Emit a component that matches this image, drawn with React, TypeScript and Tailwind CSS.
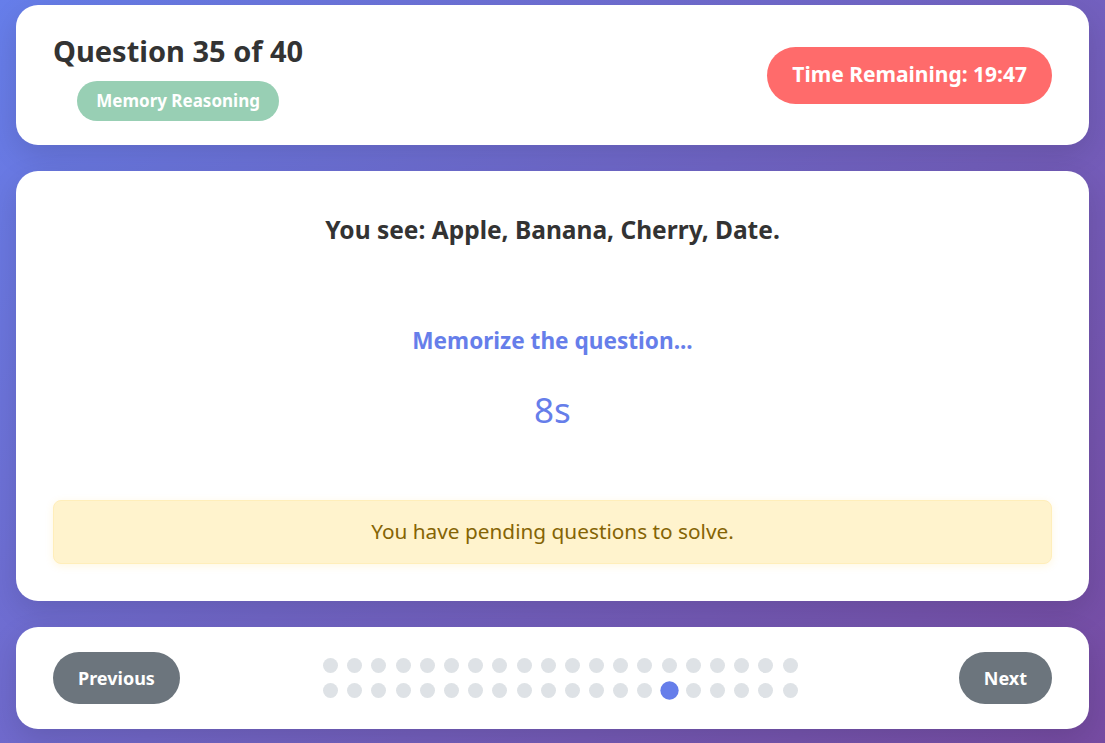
import React from "react";

const font = { fontFamily: '"Noto Sans", "Open Sans", sans-serif' };

const App: React.FC = () => {
  const dots = Array.from({ length: 40 }, (_, i) => i + 1);
  const current = 35;

  return (
    <div
      className="min-h-screen bg-linear-135 from-[#667eea] to-[#764ba2] px-[16px] pt-[5px] pb-[15px] flex flex-col gap-[26px]"
      style={font}
    >
      {/* Header */}
      <header className="bg-white rounded-[22px] shadow-[0_10px_30px_rgba(0,0,0,0.12)] px-[37px] pt-[29px] pb-[24px] flex items-center justify-between">
        <div className="flex flex-col items-center">
          <h1 className="text-[29px] leading-[34px] font-bold text-[#333]">Question 35 of 40</h1>
          <span className="mt-[13px] h-[40px] px-[19px] flex items-center rounded-full bg-[#98cfb4] text-white text-[17px] font-bold">
            Memory Reasoning
          </span>
        </div>
        <div className="h-[57px] px-[25px] flex items-center rounded-full bg-[#ff6b6b] text-white text-[21px] font-bold mb-[5px]">
          Time Remaining: 19:47
        </div>
      </header>

      {/* Question */}
      <main className="bg-white rounded-[22px] shadow-[0_10px_30px_rgba(0,0,0,0.12)] px-[37px] pt-[37px] pb-[37px] flex flex-col items-center">
        <p className="text-[24.5px] leading-[44px] font-bold text-[#333]">
          You see: Apple, Banana, Cherry, Date.
        </p>
        <p className="mt-[74px] text-[22.6px] leading-[30px] font-bold text-[#667eea]">
          Memorize the question...
        </p>
        <p className="mt-[29px] text-[35px] leading-[50px] text-[#667eea]">8s</p>
        <div className="mt-[65px] w-full h-[64px] rounded-[8px] bg-[#fff3cd] border border-[#ffeeba] shadow-[0_2px_8px_rgba(255,193,7,0.12)] flex items-center justify-center text-[20.8px] text-[#856404]">
          You have pending questions to solve.
        </div>
      </main>

      {/* Navigation */}
      <nav className="bg-white rounded-[22px] shadow-[0_10px_30px_rgba(0,0,0,0.12)] px-[37px] py-[25px] flex items-center justify-between">
        <button className="h-[52px] px-[25px] rounded-full bg-[#6c757d] text-white text-[18px] font-bold">
          Previous
        </button>
        <div className="shrink-0 mr-[18px] grid grid-cols-[repeat(20,15px)] gap-x-[9.2px] gap-y-[10px]">
          {dots.map((n) => (
            <span
              key={n}
              className={
                n === current
                  ? "w-[15px] h-[15px] rounded-full bg-[#667eea] scale-[1.22]"
                  : "w-[15px] h-[15px] rounded-full bg-[#dee2e6]"
              }
            />
          ))}
        </div>
        <button className="h-[52px] px-[25px] rounded-full bg-[#6c757d] text-white text-[18px] font-bold">
          Next
        </button>
      </nav>
    </div>
  );
};

export default App;
